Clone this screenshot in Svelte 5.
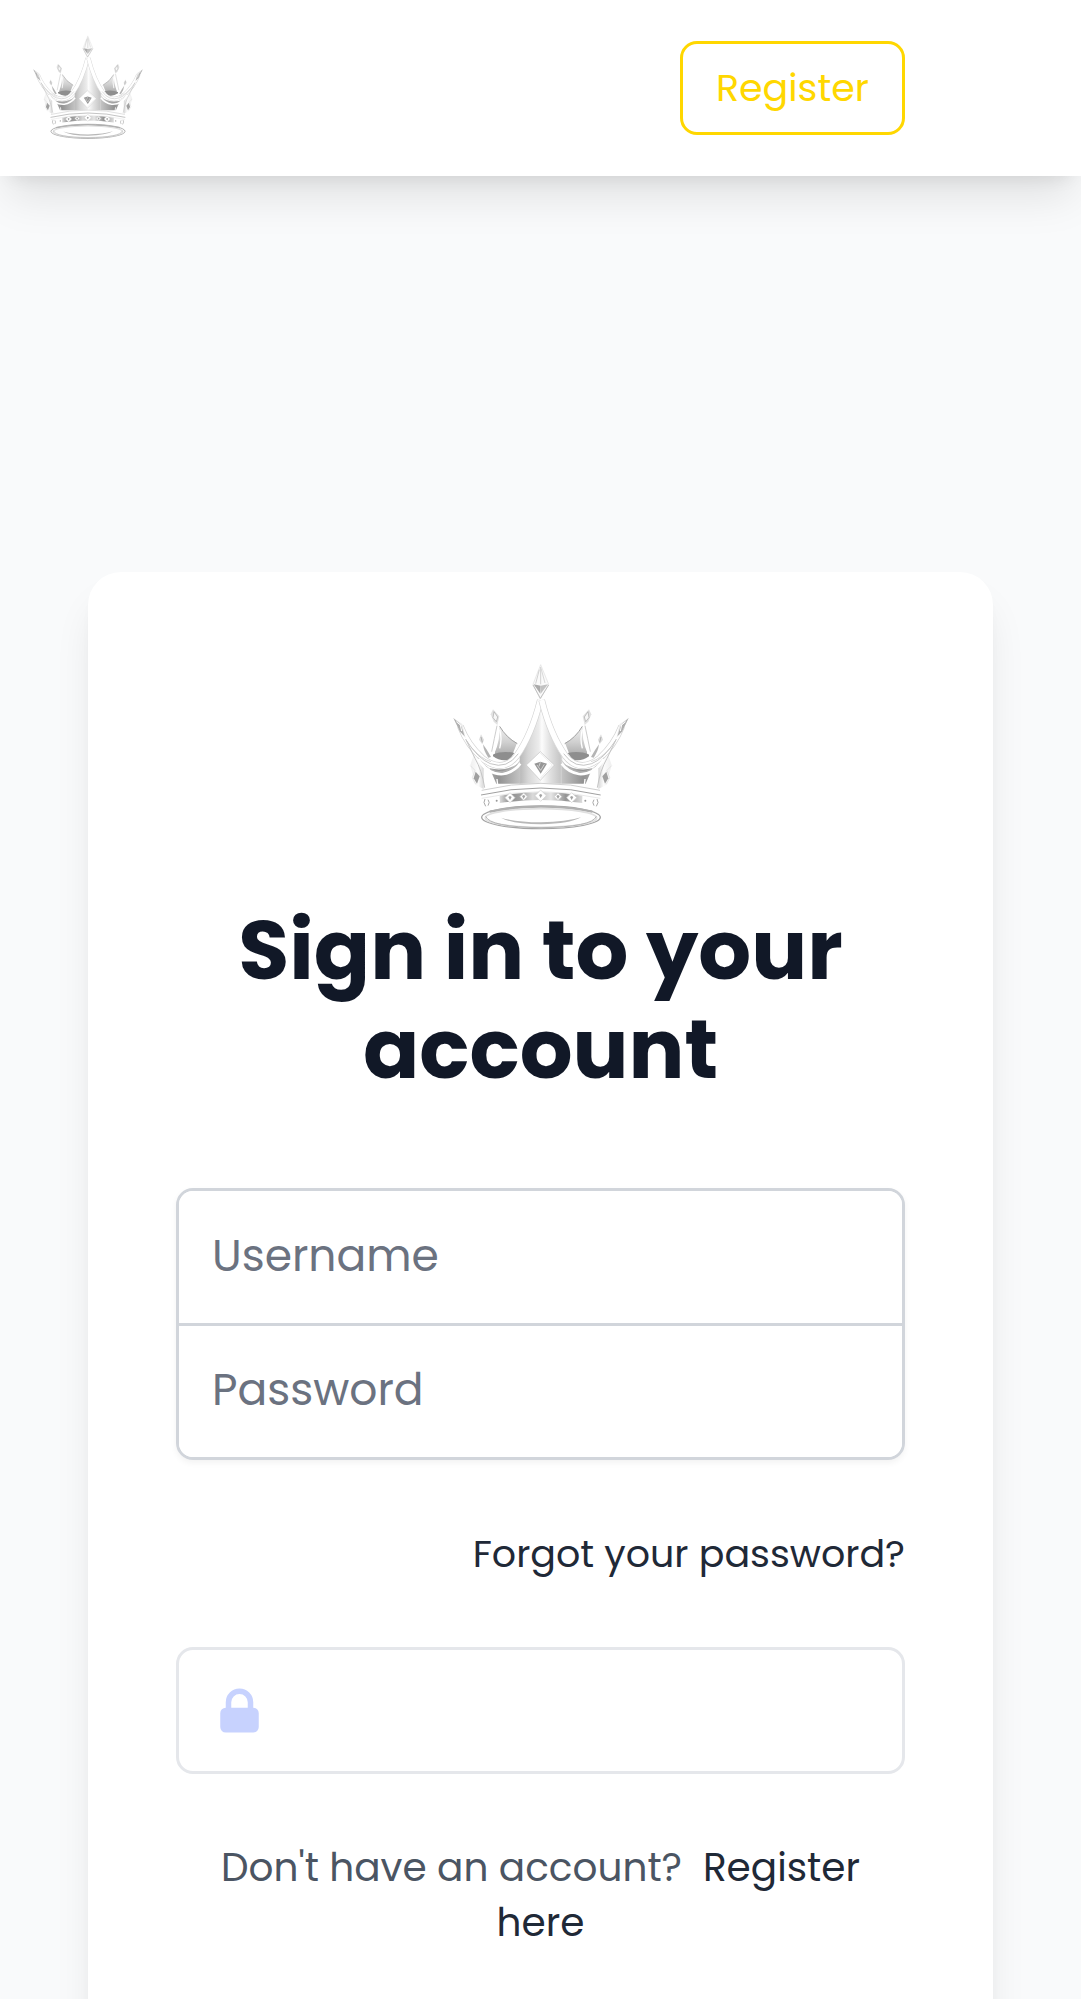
<script>
  let username = $state('');
  let password = $state('');
</script>

{#snippet half()}
  <path d="M102 300 L92 330 L108 390 L132 402 L132 340 Z" fill="url(#side)" />
  <path d="M108 350 L120 364 L112 386 L102 370 Z" fill="#a0a0a0" />
  <path d="M92 332 L106 346 L98 368 L108 388" fill="none" stroke="#dadada" stroke-width="2" />
  <path d="M124 238 L133 254 L128 268 L118 254 Z" fill="#dedede" />
  <path d="M124 246 L128 262" stroke="#b0b0b0" stroke-width="3" />
  <path d="M130 268 Q142 284 154 306 L146 308 Q132 288 130 268 Z" fill="#b4b4b4" />
  <path d="M166 290 L178 212 Q200 248 232 264 L214 310 Q186 320 166 300 Z" fill="url(#back)" />
  <path d="M160 298 Q190 286 224 294 L208 314 Q182 320 160 304 Z" fill="#8e8e8e" />
  <path d="M180 214 Q200 248 233 266" fill="none" stroke="#a2a2a2" stroke-width="3" />
  <path d="M172 210 Q180 250 158 296" fill="none" stroke="#fff" stroke-width="10" />
  <path d="M172 212 Q164 250 156 290" fill="none" stroke="#b4b4b4" stroke-width="2" />
  <path d="M180 224 Q188 250 180 280" fill="none" stroke="#fff" stroke-width="4" />
  <path d="M160 163 L153 178 L162 200 L173 210 L179 184 Z" fill="#e2e2e2" />
  <path d="M163 170 L174 186 L170 200 L160 188 Z" fill="#f7f7f7" stroke="#a8a8a8" stroke-width="2" />
  <path d="M150 340 Q200 352 242 322 L242 386 L170 386 Z" fill="url(#front)" />
  <path d="M172 372 L174 390" stroke="#fff" stroke-width="4" />
  <path d="M62 214 Q84 270 128 310 Q188 356 230 304 Q276 240 302 135" fill="none" stroke="#d2d2d2" stroke-width="20" />
  <path d="M62 214 Q84 270 128 310 Q188 356 230 304 Q276 240 302 135" fill="none" stroke="#fff" stroke-width="16" />
  <path d="M80 256 Q116 312 152 326 Q202 344 236 296" fill="none" stroke="#a8a8a8" stroke-width="2" />
  <path d="M96 278 Q124 312 154 320" fill="none" stroke="#c4c4c4" stroke-width="2" />
  <path d="M116 308 Q146 354 190 350 Q222 344 242 316" fill="none" stroke="#bababa" stroke-width="2" />
  <path d="M116 312 Q144 360 190 357 Q222 352 242 326" fill="none" stroke="#fff" stroke-width="8" />
  <path d="M41 189 L68 207 L78 250 L62 230 Z" fill="#ececec" />
  <path d="M41 189 L61 230 L75 244 L66 216 L58 204 Z" fill="#b0b0b0" />
  <path d="M50 200 L62 210 L66 228" fill="none" stroke="#fff" stroke-width="3" />
  <path d="M78 252 L106 310 Q126 344 135 398" fill="none" stroke="#c4c4c4" stroke-width="3" />
{/snippet}

{#snippet crown()}
  <svg viewBox="40 15 528 528" role="img" aria-label="Crown logo">
    <defs>
      <linearGradient id="centre" x1="0" x2="1" y1="0" y2="0">
        <stop offset="0" stop-color="#b8b8b8" />
        <stop offset=".2" stop-color="#d6d6d6" />
        <stop offset=".45" stop-color="#ececec" />
        <stop offset=".52" stop-color="#fcfcfc" />
        <stop offset=".7" stop-color="#e2e2e2" />
        <stop offset=".95" stop-color="#c6c6c6" />
        <stop offset="1" stop-color="#dedede" />
      </linearGradient>
      <linearGradient id="front" x1="0" x2="1" y1="0" y2="0">
        <stop offset="0" stop-color="#a8a8a8" />
        <stop offset=".3" stop-color="#929292" />
        <stop offset="1" stop-color="#c4c4c4" />
      </linearGradient>
      <linearGradient id="back" x1="0" x2="0" y1="0" y2="1">
        <stop offset="0" stop-color="#f4f4f4" />
        <stop offset=".5" stop-color="#cfcfcf" />
        <stop offset="1" stop-color="#a0a0a0" />
      </linearGradient>
      <linearGradient id="side" x1="0" x2="1" y1="0" y2="0">
        <stop offset="0" stop-color="#efefef" />
        <stop offset=".6" stop-color="#fcfcfc" />
        <stop offset="1" stop-color="#d8d8d8" />
      </linearGradient>
      <linearGradient id="band" x1="0" x2="1" y1="0" y2="0">
        <stop offset="0" stop-color="#dcdcdc" />
        <stop offset=".12" stop-color="#8d8d8d" />
        <stop offset=".26" stop-color="#a4a4a4" />
        <stop offset=".4" stop-color="#dadada" />
        <stop offset=".5" stop-color="#c6c6c6" />
        <stop offset=".62" stop-color="#e6e6e6" />
        <stop offset=".8" stop-color="#949494" />
        <stop offset="1" stop-color="#dcdcdc" />
      </linearGradient>
    </defs>

    <path d="M303 138 Q326 250 368 306 L368 386 L240 386 L240 306 Q280 250 303 138 Z" fill="url(#centre)" />
    <g>{@render half()}</g>
    <g transform="translate(608 0) scale(-1 1)">{@render half()}</g>

    <path d="M303 29 L280 88 L302 132 L327 88 Z" fill="#fafafa" stroke="#dedede" stroke-width="2" />
    <path d="M282 88 L303 92 L302 116 Z" fill="#ababab" />
    <path d="M325 88 L303 92 L303 116 Z" fill="#c2c2c2" />
    <path d="M303 36 L303 88 M299 44 L288 86" stroke="#bcbcbc" stroke-width="2" />
    <path d="M304 40 L316 84" stroke="#d8d8d8" stroke-width="3" />
    <path d="M280 90 L302 130 L327 90" fill="none" stroke="#c0c0c0" stroke-width="3" />

    <path d="M302 290 L260 330 L302 376 L344 330 Z" fill="#fff" stroke="#c4c4c4" stroke-width="2" />
    <path d="M302 294 L338 330 L302 370" fill="none" stroke="#ececec" stroke-width="3" />
    <path d="M284 326 L302 320 L322 326 L303 356 Z" fill="#969696" />
    <path d="M292 330 L303 346 L314 328 M302 322 L298 334" fill="none" stroke="#efefef" stroke-width="2" />

    <path d="M126 408 Q304 366 481 408 L477 468 Q304 436 131 468 Z" fill="#fff" />
    <path d="M126 406 Q304 364 481 406" fill="none" stroke="#cfcfcf" stroke-width="3" />
    <path d="M124 420 Q304 378 483 420" fill="none" stroke="#a0a0a0" stroke-width="3" />
    <path d="M126 430 Q304 390 482 430" fill="none" stroke="#dedede" stroke-width="2" />
    <path d="M180 422 Q304 402 428 422 L428 444 Q304 426 180 444 Z" fill="url(#band)" />
    {#each [[211, 428, 15], [252, 425, 11], [303, 422, 17], [355, 425, 11], [396, 428, 15]] as [x, y, r]}
      <path d="M{x} {y - r} l{r} {r} {-r} {r} {-r} {-r} Z" fill="#fff" stroke="#d0d0d0" stroke-width="2" />
      <path d="M{x - 5} {y - 2} l5 -3 5 3 -5 9 Z" fill="#a2a2a2" />
    {/each}
    <circle cx="171" cy="437" r="9" fill="#fff" />
    <circle cx="171" cy="437" r="3" fill="#999" />
    <circle cx="437" cy="437" r="9" fill="#fff" />
    <circle cx="437" cy="437" r="3" fill="#999" />
    <path d="M136 432 q-7 10 2 22 M145 434 q7 8 0 18" fill="none" stroke="#a8a8a8" stroke-width="3" />
    <path d="M472 432 q7 10 -2 22 M463 434 q-7 8 0 18" fill="none" stroke="#a8a8a8" stroke-width="3" />

    <ellipse cx="304" cy="487" rx="178" ry="34" fill="#fff" stroke="#a4a4a4" stroke-width="4" />
    <path d="M150 470 Q304 440 458 470" fill="none" stroke="#b0b0b0" stroke-width="7" />
    <ellipse cx="304" cy="489" rx="167" ry="28" fill="none" stroke="#e0e0e0" stroke-width="5" />
    <path d="M138 484 Q150 516 304 518 Q458 516 470 484" fill="none" stroke="#b4b4b4" stroke-width="3" />
    <path d="M184 488 Q220 508 304 508 Q392 506 424 487 Q380 501 304 502 Q228 501 184 488 Z" fill="#b8b8b8" />
  </svg>
{/snippet}

<header>
  <a class="brand" href="/" aria-label="Home">{@render crown()}</a>
  <a class="register" href="/register">Register</a>
</header>

<main>
  <section class="card">
    <div class="emblem">{@render crown()}</div>
    <h1>Sign in to your account</h1>
    <form onsubmit={(event) => event.preventDefault()}>
      <div class="fields">
        <input type="text" aria-label="Username" placeholder="Username" autocomplete="username" bind:value={username} />
        <input type="password" aria-label="Password" placeholder="Password" autocomplete="current-password" bind:value={password} />
      </div>
      <a class="forgot" href="/forgot-password">Forgot your password?</a>
      <button type="submit" aria-label="Sign in">
        <svg viewBox="0 0 20 20" aria-hidden="true">
          <path fill-rule="evenodd" d="M5 9V7a5 5 0 0110 0v2a2 2 0 012 2v5a2 2 0 01-2 2H5a2 2 0 01-2-2v-5a2 2 0 012-2zm8-2v2H7V7a3 3 0 016 0z" />
        </svg>
      </button>
    </form>
    <p>Don't have an account?&nbsp; <a href="/register">Register here</a></p>
  </section>
</main>

<style>
  :global(body) {
    background: #f9fafb;
    font-family: Poppins, Inter, sans-serif;
    font-size: 38px;
    line-height: 55px;
    color: #1f2937;
  }

  a {
    color: inherit;
    text-decoration: none;
  }

  svg {
    display: block;
    width: 100%;
    height: 100%;
  }

  header {
    position: relative;
    display: flex;
    align-items: center;
    justify-content: space-between;
    height: 176px;
    padding: 0 176px 0 33px;
    box-sizing: border-box;
    background: #fff;
    box-shadow: 0 28px 41px -8px rgb(0 0 0 / 10%), 0 11px 17px -11px rgb(0 0 0 / 10%);
  }

  .brand {
    width: 110px;
    height: 110px;
  }

  .register {
    padding: 16px 33px 17px;
    border: 3px solid #ffd700;
    border-radius: 17px;
    color: #ffd700;
  }

  main {
    padding: 396px 88px 88px;
  }

  .card {
    padding: 88px;
    border-radius: 33px;
    background: #fff;
    box-shadow: 0 28px 41px -8px rgb(0 0 0 / 10%), 0 11px 17px -11px rgb(0 0 0 / 10%);
  }

  .emblem {
    width: 176px;
    height: 176px;
    margin: 0 auto;
  }

  h1 {
    margin: 65px 0 89px;
    color: #111827;
    font-size: 83px;
    font-weight: 700;
    line-height: 99px;
    text-align: center;
  }

  form {
    display: flex;
    flex-direction: column;
    gap: 66px;
  }

  .fields {
    overflow: hidden;
    border: 3px solid #d1d5db;
    border-radius: 17px;
    box-shadow: 0 3px 6px rgb(0 0 0 / 5%);
  }

  input {
    display: block;
    width: 100%;
    height: 132px;
    box-sizing: border-box;
    padding: 31px 33px 35px;
    border: 0;
    outline: 0;
    background: #fff;
    color: #111827;
    font: inherit;
    font-size: 44px;
    line-height: 66px;
  }

  input + input {
    height: 134px;
    border-top: 3px solid #d1d5db;
  }

  input::placeholder {
    color: #6b7280;
    opacity: 1;
  }

  .forgot {
    align-self: flex-end;
  }

  button {
    display: flex;
    align-items: center;
    height: 127px;
    padding: 0 33px;
    border: 3px solid #e5e7eb;
    border-radius: 17px;
    background: #fff;
    font: inherit;
    cursor: pointer;
  }

  button svg {
    width: 55px;
    height: 55px;
    fill: #c7d2fe;
  }

  p {
    margin: 66px 0 0;
    color: #4b5563;
    font-size: 39px;
    text-align: center;
  }

  p a {
    color: #1f2937;
  }
</style>
